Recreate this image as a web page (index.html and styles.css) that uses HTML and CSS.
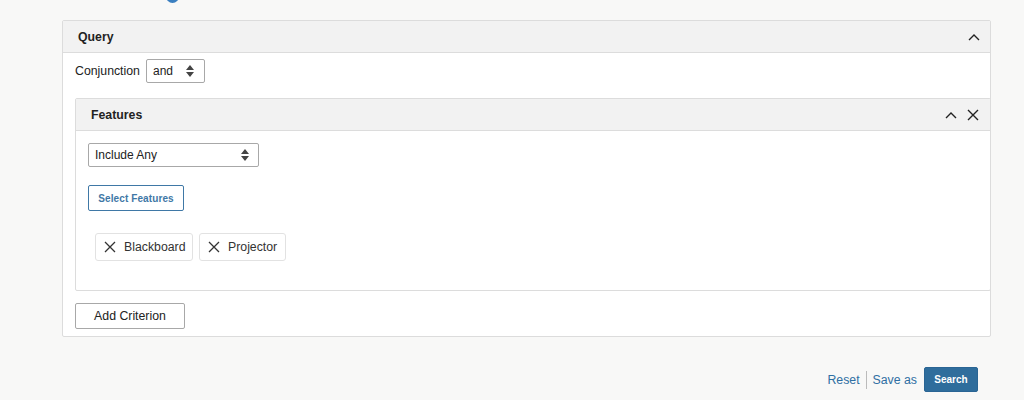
FILE: index.html
```html
<!DOCTYPE html>
<html>
<head>
<meta charset="utf-8">
<link rel="stylesheet" href="styles.css">
</head>
<body>
<div class="top"><span class="dot"></span></div>
<div class="panel outer">
  <div class="panel-head">
    <span class="title">Query</span>
    <span class="tools">
      <svg class="ico" width="12" height="8" viewBox="0 0 12 8"><path d="M1 7 L6 2 L11 7" fill="none" stroke="#222" stroke-width="1.4"/></svg>
    </span>
  </div>
  <div class="outer-body">
    <div class="conj-row">
      <span class="label">Conjunction</span>
      <div class="select sel-conj"><span>and</span>
        <svg width="8" height="12" viewBox="0 0 8 12"><path d="M0 5 L4 0 L8 5 Z M0 7 L4 12 L8 7 Z" fill="#444"/></svg>
      </div>
    </div>
    <div class="panel inner">
      <div class="panel-head inner-head">
        <span class="title">Features</span>
        <span class="tools">
          <svg class="ico" width="12" height="8" viewBox="0 0 12 8"><path d="M1 7 L6 2 L11 7" fill="none" stroke="#222" stroke-width="1.4"/></svg>
          <svg class="ico" width="12" height="12" viewBox="0 0 12 12"><path d="M1 1 L11 11 M11 1 L1 11" fill="none" stroke="#222" stroke-width="1.4"/></svg>
        </span>
      </div>
      <div class="inner-body">
        <div class="select sel-incl"><span>Include Any</span>
          <svg width="8" height="12" viewBox="0 0 8 12"><path d="M0 5 L4 0 L8 5 Z M0 7 L4 12 L8 7 Z" fill="#444"/></svg>
        </div>
        <button class="btn-outline">Select Features</button>
        <div class="chips">
          <span class="chip chip-bb">
            <svg width="12" height="12" viewBox="0 0 12 12"><path d="M1 1 L11 11 M11 1 L1 11" fill="none" stroke="#333" stroke-width="1.3"/></svg>
            Blackboard</span>
          <span class="chip chip-pr">
            <svg width="12" height="12" viewBox="0 0 12 12"><path d="M1 1 L11 11 M11 1 L1 11" fill="none" stroke="#333" stroke-width="1.3"/></svg>
            Projector</span>
        </div>
      </div>
    </div>
    <button class="btn-plain">Add Criterion</button>
  </div>
</div>
<div class="footer">
  <a class="link">Reset</a>
  <span class="sep"></span>
  <a class="link">Save as</a>
  <button class="btn-primary">Search</button>
</div>
</body>
</html>
```

FILE: styles.css
```css
* { box-sizing: border-box; }
body {
  margin: 0;
  background: #f8f8f7;
  font-family: "Liberation Sans", Arial, sans-serif;
  font-size: 12px;
  color: #222;
}
.top {
  height: 20px;
  position: relative;
}
.dot {
  position: absolute;
  left: 166px;
  top: -10px;
  width: 13px;
  height: 13px;
  border-radius: 50%;
  background: #3b7fc0;
}
.panel {
  background: #fff;
  border: 1px solid #dcdcdc;
  border-radius: 2px;
}
.outer {
  margin-left: 62px;
  width: 929px;
}
.panel-head {
  height: 32px;
  background: #f2f2f2;
  border-bottom: 1px solid #dcdcdc;
  display: flex;
  align-items: center;
  justify-content: space-between;
  padding: 0 10px 0 15px;
}
.title {
  font-weight: bold;
  font-size: 12.3px;
  color: #222;
}
.tools {
  display: flex;
  align-items: center;
  gap: 10px;
}
.outer-body {
  padding: 6px 0 7px 12px;
}
.conj-row {
  display: flex;
  align-items: center;
  gap: 6px;
  height: 24px;
}
.label { font-size: 12.3px; color: #222; }
.select {
  display: flex;
  align-items: center;
  justify-content: space-between;
  height: 24px;
  border: 1px solid #a8a8a8;
  border-radius: 2px;
  background: #fff;
  padding: 0 10px 0 6px;
  font-size: 12px;
  color: #222;
}
.sel-conj { width: 59px; }
.sel-incl { width: 171px; padding-right: 9px; padding-left: 6px; }
.inner {
  margin-top: 15px;
  margin-right: -1px;
}
.inner-head {
  height: 32px;
  padding-right: 11px;
}
.inner-body {
  padding: 12px 12px 0 12px;
  height: 159px;
}
.btn-outline {
  display: block;
  margin-top: 18px;
  width: 96px;
  height: 26px;
  border: 1px solid #3f78a6;
  border-radius: 2px;
  background: #fff;
  color: #3f78a6;
  font-family: "Liberation Sans", Arial, sans-serif;
  font-size: 10px;
  font-weight: bold;
  padding: 0;
  letter-spacing: 0.1px;
}
.chips {
  display: flex;
  gap: 6px;
  margin-top: 22px;
  padding-left: 7px;
}
.chip {
  display: flex;
  align-items: center;
  gap: 8px;
  height: 28px;
  border: 1px solid #e2e2e2;
  border-radius: 3px;
  padding: 0 0 0 8px;
  font-size: 12.3px;
  color: #333;
  background: #fff;
}
.chip-bb { width: 98px; }
.chip-pr { width: 87px; }
.btn-plain {
  display: block;
  margin-top: 12px;
  width: 110px;
  height: 26px;
  border: 1px solid #a8a8a8;
  border-radius: 2px;
  background: #fff;
  color: #222;
  font-family: "Liberation Sans", Arial, sans-serif;
  font-size: 12.3px;
  padding: 0;
}
.footer {
  display: flex;
  justify-content: flex-end;
  align-items: center;
  margin-top: 30px;
  padding-right: 46px;
  height: 25px;
}
.link {
  color: #2f6fa3;
  font-size: 12.3px;
}
.sep {
  width: 1px;
  height: 18px;
  background: #bbb;
  margin: 0 6px;
}
.btn-primary {
  margin-left: 7px;
  width: 54px;
  height: 25px;
  border: 1px solid #2a6594;
  border-radius: 2px;
  background: #2f6d9c;
  color: #fff;
  font-family: "Liberation Sans", Arial, sans-serif;
  font-size: 10px;
  font-weight: bold;
  padding: 0;
}
```
